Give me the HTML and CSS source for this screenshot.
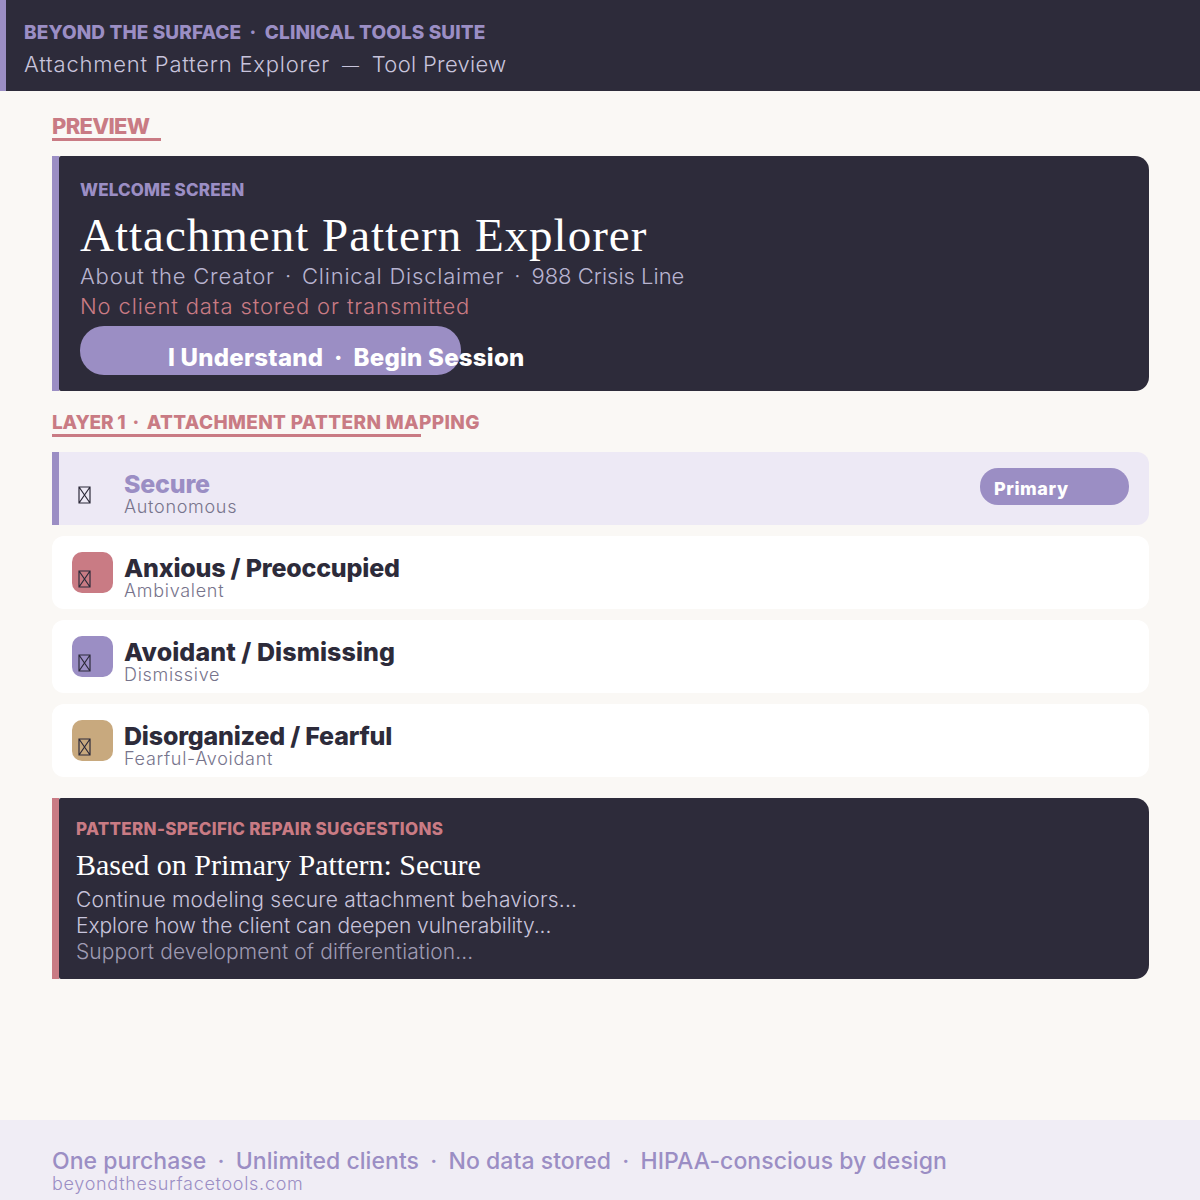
FILE: index.html
```html
<!DOCTYPE html>
<html lang="en">
<head>
    <meta charset="UTF-8">
    <title>Attachment Pattern Explorer</title>
    <link rel="stylesheet" href="styles.css">
</head>
<body>
    <div class="page">
        <header class="top-bar">
            <div class="suite">BEYOND THE SURFACE <span class="dot">·</span> CLINICAL TOOLS SUITE</div>
            <div class="tool-name">Attachment Pattern Explorer <span class="dash">—</span> <span class="tool-tail">Tool Preview</span></div>
        </header>

        <main class="content">
            <div class="section-label preview-label">PREVIEW</div>

            <section class="panel">
                <div class="panel-bar"></div>
                <div class="welcome">
                    <div class="eyebrow">WELCOME SCREEN</div>
                    <h1>Attachment Pattern Explorer</h1>
                    <div class="welcome-links">About the Creator <span class="dot">·</span> Clinical Disclaimer <span class="dot">·</span> <span class="crisis">988 Crisis Line</span></div>
                    <div class="welcome-note">No client data stored or transmitted</div>
                    <div class="begin-btn">I Understand <span class="dot">·</span> Begin Session</div>
                </div>
            </section>

            <div class="section-label layer-label"><span class="layer-num">LAYER 1</span> <span class="dot">·</span> ATTACHMENT PATTERN MAPPING</div>

            <div class="pattern-list">
                <div class="pattern active">
                    <div class="pattern-icon">
                        <svg class="missing" viewBox="0 0 13 18"><path d="M1 1h11v16H1z M1 1l11 16 M12 1L1 17"/></svg>
                    </div>
                    <div class="pattern-text">
                        <div class="pattern-name">Secure</div>
                        <div class="pattern-sub">Autonomous</div>
                    </div>
                    <div class="badge">Primary</div>
                </div>
                <div class="pattern">
                    <div class="pattern-icon rose">
                        <svg class="missing" viewBox="0 0 13 18"><path d="M1 1h11v16H1z M1 1l11 16 M12 1L1 17"/></svg>
                    </div>
                    <div class="pattern-text">
                        <div class="pattern-name">Anxious / Preoccupied</div>
                        <div class="pattern-sub">Ambivalent</div>
                    </div>
                </div>
                <div class="pattern">
                    <div class="pattern-icon lavender">
                        <svg class="missing" viewBox="0 0 13 18"><path d="M1 1h11v16H1z M1 1l11 16 M12 1L1 17"/></svg>
                    </div>
                    <div class="pattern-text">
                        <div class="pattern-name wide">Avoidant / Dismissing</div>
                        <div class="pattern-sub">Dismissive</div>
                    </div>
                </div>
                <div class="pattern">
                    <div class="pattern-icon sand">
                        <svg class="missing" viewBox="0 0 13 18"><path d="M1 1h11v16H1z M1 1l11 16 M12 1L1 17"/></svg>
                    </div>
                    <div class="pattern-text">
                        <div class="pattern-name">Disorganized / Fearful</div>
                        <div class="pattern-sub">Fearful-Avoidant</div>
                    </div>
                </div>
            </div>

            <section class="panel repair-panel">
                <div class="panel-bar rose-bar"></div>
                <div class="repair">
                    <div class="repair-eyebrow">PATTERN-SPECIFIC REPAIR SUGGESTIONS</div>
                    <h2>Based on Primary Pattern: Secure</h2>
                    <div class="repair-line first">Continue modeling secure attachment behaviors...</div>
                    <div class="repair-line second">Explore how the client can deepen vulnerability...</div>
                    <div class="repair-line faded">Support development of differentiation...</div>
                </div>
            </section>
        </main>

        <footer class="bottom-bar">
            <div class="selling">One purchase <span class="dot">·</span> Unlimited clients <span class="dot">·</span> No data stored <span class="dot">·</span> HIPAA-conscious by design</div>
            <div class="site">beyondthesurfacetools.com</div>
        </footer>
    </div>
</body>
</html>
```
FILE: styles.css
```css
body {
    margin: 0;
    background: #faf8f5;
    font-family: 'Inter', 'Open Sans', sans-serif;
}

.page {
    width: 1200px;
    height: 1200px;
    display: flex;
    flex-direction: column;
}

.dot {
    margin: 0 0.22em;
}

.top-bar {
    height: 91px;
    box-sizing: border-box;
    background: #2d2b3a;
    border-left: 6px solid #9b8ec4;
    padding: 20px 18px 0;
}

.suite {
    font-size: 19px;
    line-height: 26px;
    font-weight: 800;
    letter-spacing: 0.1px;
    color: #9b8ec4;
}

.tool-name {
    margin-top: 2px;
    font-size: 22px;
    line-height: 32px;
    font-weight: 300;
    letter-spacing: 0.78px;
    color: #c8c4dc;
}

.dash {
    margin: 0 5px;
    font-size: 17px;
}

.tool-tail {
    letter-spacing: 0.3px;
}

.content {
    flex: 1;
    padding: 0 51px 0 52px;
}

.section-label {
    font-weight: 800;
    color: #c97b84;
    white-space: nowrap;
    border-bottom: 3px solid #c97b84;
}

.preview-label {
    width: 109px;
    margin: 23px 0 15px;
    font-size: 22px;
    line-height: 24px;
    letter-spacing: -0.7px;
}

.layer-label {
    width: 369px;
    margin: 20px 0 15px;
    font-size: 19px;
    line-height: 23px;
    letter-spacing: 0.35px;
}

.layer-label .dot {
    margin: 0 0.14em;
}

.layer-num {
    letter-spacing: -0.2px;
}

.panel {
    display: flex;
    height: 235px;
}

.panel-bar {
    width: 7px;
    flex-shrink: 0;
    background: #9b8ec4;
}

.panel-bar.rose-bar {
    background: #c97b84;
}

.welcome {
    flex: 1;
    box-sizing: border-box;
    background: #2d2b3a;
    border-radius: 2px 14px 14px 2px;
    padding: 21px 21px 0;
}

.eyebrow {
    font-size: 17px;
    line-height: 26px;
    font-weight: 800;
    letter-spacing: 0.15px;
    color: #9b8ec4;
}

.welcome h1 {
    margin: 7px 0 1px;
    font-family: 'Liberation Serif', serif;
    font-size: 47px;
    line-height: 50px;
    font-weight: 400;
    letter-spacing: 1px;
    color: #ffffff;
}

.welcome-links {
    font-size: 22px;
    line-height: 30px;
    font-weight: 300;
    letter-spacing: 0.8px;
    color: #b8b4d0;
}

.welcome-links .dot {
    margin: 0 0.14em;
}

.crisis {
    letter-spacing: 0;
}

.welcome-note {
    font-size: 22px;
    line-height: 30px;
    font-weight: 300;
    letter-spacing: 0.88px;
    color: #c97b84;
}

.begin-btn {
    width: 293px;
    height: 49px;
    margin-top: 5px;
    padding-left: 88px;
    background: #9b8ec4;
    border-radius: 24px;
    white-space: nowrap;
    font-size: 24px;
    line-height: 63px;
    font-weight: 800;
    letter-spacing: 0.25px;
    color: #ffffff;
}

.pattern-list {
    display: flex;
    flex-direction: column;
    gap: 11px;
}

.pattern {
    height: 73px;
    box-sizing: border-box;
    display: flex;
    align-items: center;
    background: #ffffff;
    border-radius: 12px;
    padding: 0 20px;
}

.pattern.active {
    background: #ede9f5;
    border-left: 7px solid #9b8ec4;
    border-radius: 0 12px 12px 0;
    padding-left: 13px;
}

.pattern-icon {
    width: 41px;
    height: 41px;
    box-sizing: border-box;
    flex-shrink: 0;
    margin-right: 11px;
    padding: 18px 0 0 6px;
    border-radius: 10px;
}

.pattern-icon.rose { background: #c97b84; }
.pattern-icon.lavender { background: #9b8ec4; }
.pattern-icon.sand { background: #c8a97e; }

/* the reference shows an empty glyph box in place of the emoji */
.missing {
    display: block;
    width: 13px;
    height: 18px;
    fill: none;
    stroke: #2d2b3a;
    stroke-width: 1.2;
}

.pattern-text {
    flex: 1;
    padding-top: 10px;
}

.pattern-name {
    font-size: 25px;
    line-height: 26px;
    font-weight: 800;
    letter-spacing: -0.2px;
    color: #2d2b3a;
}

.pattern-name.wide {
    letter-spacing: 0.08px;
}

.pattern.active .pattern-name {
    color: #9b8ec4;
}

.pattern-sub {
    font-size: 18px;
    line-height: 20px;
    font-weight: 300;
    letter-spacing: 0.7px;
    color: #77748c;
}

.badge {
    align-self: flex-start;
    width: 149px;
    height: 37px;
    box-sizing: border-box;
    margin-top: 16px;
    padding-left: 14px;
    background: #9b8ec4;
    border-radius: 18px;
    font-size: 18px;
    line-height: 42px;
    font-weight: 800;
    letter-spacing: 0.55px;
    color: #ffffff;
}

.repair-panel {
    height: 181px;
    margin-top: 21px;
}

.repair {
    flex: 1;
    box-sizing: border-box;
    background: #2d2b3a;
    border-radius: 2px 14px 14px 2px;
    padding: 19px 17px 0;
}

.repair-eyebrow {
    font-size: 17px;
    line-height: 24px;
    font-weight: 800;
    letter-spacing: 0.3px;
    color: #c97b84;
}

.repair h2 {
    margin: 4px 0 2px;
    font-family: 'Liberation Serif', serif;
    font-size: 30px;
    line-height: 40px;
    font-weight: 400;
    color: #ffffff;
}

.repair-line {
    font-size: 21px;
    line-height: 26px;
    font-weight: 300;
    letter-spacing: 0.1px;
    color: #c8c4dc;
}

.repair-line.first {
    letter-spacing: 0.22px;
}

.repair-line.second {
    letter-spacing: -0.06px;
}

.repair-line.faded {
    color: #9f9bb3;
}

.bottom-bar {
    height: 80px;
    box-sizing: border-box;
    background: #f0edf5;
    padding: 27px 52px 0;
}

.selling {
    font-size: 23px;
    line-height: 28px;
    font-weight: 500;
    letter-spacing: 0.05px;
    color: #9b8ec4;
}

.site {
    font-size: 18px;
    line-height: 18px;
    font-weight: 300;
    letter-spacing: 0.7px;
    color: #9b8ec4;
}
```
